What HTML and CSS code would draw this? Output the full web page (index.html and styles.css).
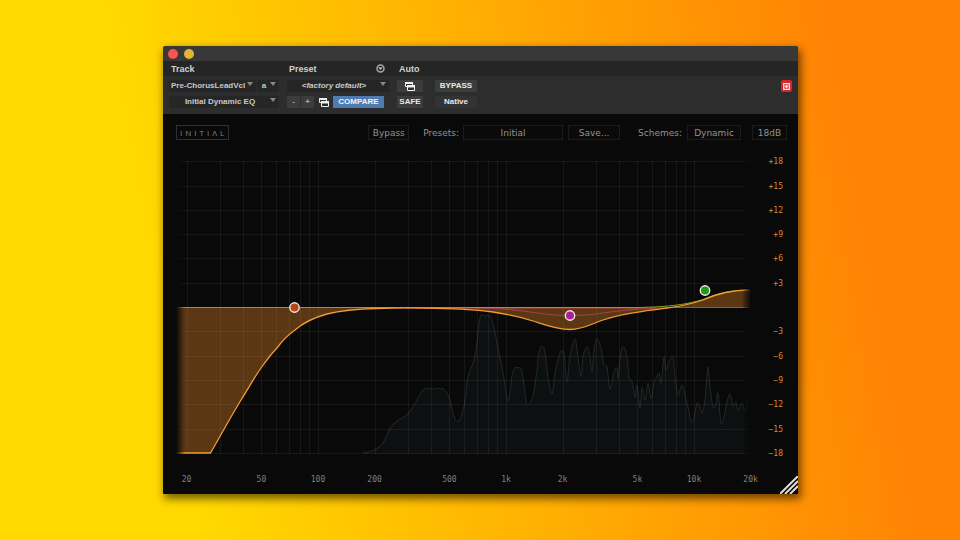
FILE: index.html
```html
<!DOCTYPE html>
<html lang="en">
<head>
    <meta charset="UTF-8">
    <meta name="viewport" content="width=device-width, initial-scale=1.0">
    <title>Initial Dynamic EQ</title>
    <link rel="stylesheet" href="styles.css">
</head>
<body>
    <main class="window">
        <div class="titlebar">
            <button class="light close" aria-label="Close"></button>
            <button class="light minimize" aria-label="Minimize"></button>
        </div>

        <div class="host-labels host-grid">
            <span>Track</span>
            <span class="preset-label">Preset
                <button class="menu-button" aria-label="Preset menu">
                    <svg viewBox="0 0 9 9"><circle cx="4.5" cy="4.5" r="3.5"/><path d="M2.2 3.3h4.600L4.500 6.200z"/></svg>
                </button>
            </span>
            <span>Auto</span>
        </div>

        <div class="host-controls host-grid">
            <div class="host-column">
                <div class="host-row">
                    <span class="drop wide"><select class="left" aria-label="Track name"><option>Pre-ChorusLeadVcl</option></select></span>
                    <span class="drop letter"><select aria-label="Insert"><option>a</option></select></span>
                </div>
                <div class="host-row">
                    <span class="drop wide"><select aria-label="Plug-in"><option>Initial Dynamic EQ</option></select></span>
                </div>
            </div>
            <div class="host-column">
                <div class="host-row">
                    <span class="drop wide"><select class="italic" aria-label="Preset"><option>&lt;factory default&gt;</option></select></span>
                </div>
                <div class="host-row">
                    <button class="step">-</button>
                    <button class="step">+</button>
                    <button class="copy" aria-label="Copy settings">
                        <svg class="copy-icon" viewBox="0 0 10 9"><path class="sheet" d="M.5.5h7v4h-7z"/><path d="M0 0h8v2H0z"/><path class="sheet" d="M2.500 3.500h7v5h-7z"/><path d="M2 3h8v2.500H2z"/></svg>
                    </button>
                    <button class="compare">COMPARE</button>
                </div>
            </div>
            <div class="host-column">
                <button class="auto" aria-label="Automation">
                    <svg class="copy-icon" viewBox="0 0 10 9"><path class="sheet" d="M.5.5h7v4h-7z"/><path d="M0 0h8v2H0z"/><path class="sheet" d="M2.500 3.500h7v5h-7z"/><path d="M2 3h8v2.500H2z"/></svg>
                </button>
                <button class="auto">SAFE</button>
            </div>
            <div class="host-column">
                <button>BYPASS</button>
                <button class="native">Native</button>
            </div>
            <button class="target" aria-label="Target">
                <svg viewBox="0 0 8 8"><path d="M.8.8h6.4v6.4H.8z"/><path d="M4 2v4M2 4h4"/></svg>
            </button>
        </div>

        <div class="toolbar">
            <span class="logo">INITIΛL</span>
            <button class="bypass">Bypass</button>
            <label for="presets">Presets:</label>
            <select id="presets" class="presets"><option>Initial</option></select>
            <button class="save">Save...</button>
            <label for="schemes" class="schemes-label">Schemes:</label>
            <select id="schemes" class="schemes"><option>Dynamic</option></select>
            <select class="slope" aria-label="Slope"><option>18dB</option></select>
        </div>

        <svg class="graph" viewBox="0 0 635 340" role="img" aria-label="Equalizer curve">
            <defs>
                <linearGradient id="edgeFade">
                    <stop offset="0" stop-color="#fff" stop-opacity="0"/>
                    <stop offset="0.015" stop-color="#fff"/>
                    <stop offset="0.985" stop-color="#fff"/>
                    <stop offset="1" stop-color="#fff" stop-opacity="0.1"/>
                </linearGradient>
                <mask id="edges" maskUnits="userSpaceOnUse" x="0" y="-5" width="575" height="305">
                    <rect x="0" y="-5" width="574" height="305" fill="url(#edgeFade)"/>
                </mask>
            </defs>
            <g transform="translate(13 7)">
                <g mask="url(#edges)">
                    <path id="spectrumFill" class="spectrum-fill"/>
                    <path id="spectrumLine" class="spectrum-line"/>
                    <g id="grid" class="grid"></g>
                    <path class="eq-fill" d="M0 292H34.5C45 274 54 257 65 239C72 228 78 217 85 207C90 200 95 193 101 187C106 180 112 174 119 169C128 161 140 156 151 153C165 149.5 180 148 200 147.5C215 147 250 147 260 147.3C285 147.8 303 149 317 151C333 153.5 346 156.5 357 160C368 163.5 380 168.5 394 168.5C407 168.5 415 163 427 159C440 154.5 454 152 467 150.3C477 149 486 148 494 146.7C505 145 518 142 527 139C540 133 553 129 574 129V146.5H0Z"/>
                    <path class="band red" d="M230 147H480M490 146.500H574"/>
                    <path class="band purple" d="M300 147C350 147.5 362 154.5 394 154.5C426 154.5 436 148 490 147"/>
                    <path class="band green" d="M0 146.5H460C495 146 512 143 527 138.5C540 133 553 129 574 129"/>
                    <path class="eq-line" d="M0 292H34.5C45 274 54 257 65 239C72 228 78 217 85 207C90 200 95 193 101 187C106 180 112 174 119 169C128 161 140 156 151 153C165 149.5 180 148 200 147.5C215 147 250 147 260 147.3C285 147.8 303 149 317 151C333 153.5 346 156.5 357 160C368 163.5 380 168.5 394 168.5C407 168.5 415 163 427 159C440 154.5 454 152 467 150.3C477 149 486 148 494 146.7C505 145 518 142 527 139C540 133 553 129 574 129"/>
                </g>
                <circle class="handle low" cx="118.5" cy="146.5" r="4.7"/>
                <circle class="handle mid" cx="394" cy="154.5" r="4.7"/>
                <circle class="handle high" cx="529" cy="129.5" r="4.7"/>
                <g id="frequencies" class="frequencies"></g>
                <g id="gains" class="gains"></g>
            </g>
        </svg>
        <svg class="grip" viewBox="0 0 18 18"><path d="M0 18L18 0M5 18L18 5M10 18L18 10"/></svg>
    </main>
    <script src="script.js"></script>
</body>
</html>
```
FILE: styles.css
```css
* {
    box-sizing: border-box;
}

body {
    margin: 0;
    min-height: 100vh;
    padding: 46px 162px 46px 163px;
    background: linear-gradient(80deg, #ffd900 19%, #ff8404 87%);
    font-family: "Liberation Sans", Arial, sans-serif;
}

.window {
    position: relative;
    background: #090909;
    border-radius: 3px 3px 1px 1px;
    box-shadow: 2px 4px 8px 1px rgba(0, 0, 0, 0.55);
    overflow: hidden;
}

button, select {
    appearance: none;
    margin: 0;
    padding: 0;
    border: none;
    border-radius: 0;
    font: inherit;
    color: inherit;
    cursor: pointer;
}

svg {
    display: block;
}

/* title bar */
.titlebar {
    display: flex;
    align-items: center;
    gap: 6px;
    height: 15px;
    padding-left: 5px;
    background: #383838;
}

.light {
    width: 10px;
    height: 10px;
    border-radius: 50%;
}

.close {
    background: #f9554e;
}

.minimize {
    background: #e3b535;
}

/* plug-in host header */
.host-grid {
    display: grid;
    grid-template-columns: 110px 102px 30px 42px 1fr;
    column-gap: 8px;
    padding: 0 6px;
}

.host-labels {
    height: 15px;
    align-items: center;
    background: #252525;
    color: #d0d0d0;
    font-size: 9px;
    font-weight: bold;
}

.host-labels span {
    padding-left: 2px;
}

.preset-label {
    display: flex;
    align-items: center;
    justify-content: space-between;
}

.menu-button {
    width: 9px;
    height: 9px;
    margin-right: 4px;
    background: none;
}

.menu-button circle {
    fill: none;
    stroke: #a5a5a5;
    stroke-width: 1.5;
}

.menu-button path {
    fill: #b5b5b5;
}

.host-controls {
    padding-top: 4px;
    padding-bottom: 6px;
    background: #2d2d2d;
    color: #e8e8e8;
    font-size: 8px;
    font-weight: bold;
}

.host-column {
    display: flex;
    flex-direction: column;
    gap: 4px;
}

.host-row {
    display: flex;
    gap: 1px;
}

.host-controls button,
.host-controls select {
    height: 12px;
    line-height: 12px;
    background: #3c3c3c;
}

.drop {
    position: relative;
}

.drop::after {
    content: "";
    position: absolute;
    top: 2px;
    right: 3px;
    border: 3px solid transparent;
    border-top: 4px solid #888;
    border-bottom: none;
    pointer-events: none;
}

.host-controls .drop select {
    display: block;
    width: 100%;
    padding: 0 8px 0 0;
    background: #262626;
    color: #c8c8c8;
    text-align-last: center;
}

.host-controls .drop .left {
    padding: 0 0 0 2px;
    text-align-last: left;
}

.host-controls .drop .italic {
    font-style: italic;
}

.wide {
    flex: 1;
}

.letter {
    width: 22px;
}

.host-controls .step {
    width: 13px;
    color: #aaa;
}

.host-controls .copy {
    width: 17px;
    background: none;
}

.copy-icon {
    width: 10px;
    height: 9px;
    margin: 0 auto;
    fill: #f0f0f0;
}

.copy-icon .sheet {
    fill: #2d2d2d;
    stroke: #f0f0f0;
}

.host-controls .compare {
    width: 51px;
    background: #4f7bb0;
    color: #f0f4fa;
}

.host-controls .auto {
    width: 26px;
}

.host-controls .native {
    background: #333;
}

.host-controls .target {
    justify-self: end;
    width: 11px;
    background: #d3292c;
    border-radius: 2px;
}

.target svg {
    width: 7px;
    height: 7px;
    margin: 0 auto;
    fill: none;
    stroke: #ffd8d8;
    stroke-width: 1.5;
}

/* plug-in toolbar */
.toolbar {
    display: flex;
    align-items: center;
    padding: 11px 11px 14px 13px;
    color: #929292;
    font-family: "DejaVu Sans", sans-serif;
    font-size: 9px;
}

.toolbar button,
.toolbar select {
    height: 15px;
    border: 1px solid #1c1c1c;
    background: #0a0a0a;
    text-align: center;
    text-align-last: center;
}

.logo {
    width: 53px;
    height: 15px;
    margin-right: auto;
    padding-left: 3px;
    border: 1px solid #303030;
    color: #858585;
    font-family: "Open Sans", sans-serif;
    font-size: 8px;
    line-height: 13px;
    letter-spacing: 3px;
}

.bypass {
    width: 41px;
    margin-right: 14px;
}

.presets {
    width: 100px;
    margin: 0 5px 0 4px;
}

.save {
    width: 52px;
}

.schemes-label {
    margin-left: 18px;
}

.schemes {
    width: 54px;
    margin: 0 11px 0 5px;
}

.slope {
    width: 35px;
}

/* graph */
.graph {
    width: 100%;
    height: auto;
    font-family: "DejaVu Sans Mono", monospace;
    font-size: 8px;
}

.grid {
    stroke: #fff;
    stroke-opacity: 0.06;
}

.spectrum-fill {
    fill: #0d1011;
}

.spectrum-line {
    fill: none;
    stroke: #25292a;
}

.eq-fill {
    fill: #f79028;
    fill-opacity: 0.35;
}

.eq-line {
    fill: none;
    stroke: #f29b35;
    stroke-width: 1.3;
}

.band {
    fill: none;
    stroke-width: 1;
}

.red {
    stroke: #b8482c;
}

.purple {
    stroke: #a04450;
}

.green {
    stroke: #86a326;
}

.handle {
    stroke: #f0e8e0;
    stroke-width: 1.4;
}

.low {
    fill: #b04a18;
}

.mid {
    fill: #a8209a;
}

.high {
    fill: #1d9a1d;
}

.frequencies {
    fill: #808080;
    text-anchor: middle;
}

.gains {
    fill: #dc8934;
    text-anchor: end;
}

.grip {
    position: absolute;
    right: 0;
    bottom: 0;
    width: 18px;
    height: 18px;
    fill: none;
    stroke: #ddd;
    stroke-width: 2;
}
```
FILE: script.js
```javascript
const NS = 'http://www.w3.org/2000/svg';

function add(parent, name, attrs, text) {
    const el = document.createElementNS(NS, name);
    for (const key in attrs) el.setAttribute(key, attrs[key]);
    if (text) el.textContent = text;
    parent.appendChild(el);
}

// log frequency and linear gain to plot coordinates
const xOf = freq => 142 + 188 * Math.log10(freq / 100);
const yOf = gain => 146.5 - gain * 8.1;

const grid = document.getElementById('grid');
for (let decade = 10; decade <= 10000; decade *= 10) {
    for (let n = 1; n < 10; n++) {
        const freq = decade * n;
        if (freq < 20 || freq > 10000) continue;
        const x = Math.round(xOf(freq)) + 0.5;
        add(grid, 'path', { d: `M${x} 0V293` });
    }
}

const gains = document.getElementById('gains');
for (let gain = 18; gain >= -18; gain -= 3) {
    if (gain === 0) continue;
    const y = Math.floor(yOf(gain)) + 0.5;
    add(grid, 'path', { d: `M0 ${y}H574` });
    add(gains, 'text', { x: 607, y: y + 2.5 }, (gain > 0 ? '+' : '\u2212') + Math.abs(gain));
}

const frequencies = document.getElementById('frequencies');
[20, 50, 100, 200, 500, 1000, 2000, 5000, 10000, 20000].forEach(freq => {
    const label = freq < 1000 ? String(freq) : freq / 1000 + 'k';
    add(frequencies, 'text', { x: xOf(freq), y: 321 }, label);
});

const spectrum = [
    [187, 292], [196, 290], [207, 282], [214, 267], [221, 260], [232, 253], [241, 239], [248, 228],
    [257, 228], [267, 228], [273, 236], [277, 252], [282, 261], [288, 245], [292, 216], [299, 195],
    [304, 157], [309, 155], [314, 155], [317, 162], [321, 182], [327, 212], [332, 240], [336, 215],
    [339, 207], [345, 208], [347, 217], [350, 239], [352, 244], [357, 235], [361, 209], [363, 191],
    [366, 185], [369, 192], [372, 216], [376, 233], [379, 212], [384, 192], [388, 193], [391, 221],
    [394, 195], [399, 178], [401, 189], [405, 216], [407, 196], [411, 186], [414, 196], [416, 211],
    [418, 189], [421, 178], [425, 187], [428, 204], [431, 206], [434, 228], [438, 211], [441, 207],
    [442, 217], [445, 191], [448, 186], [451, 196], [453, 216], [456, 221], [459, 236], [461, 224],
    [464, 247], [466, 226], [469, 239], [472, 222], [475, 238], [478, 221], [481, 216], [483, 212],
    [485, 222], [488, 196], [490, 209], [493, 201], [497, 196], [499, 216], [502, 234], [506, 224],
    [510, 239], [512, 246], [515, 261], [518, 257], [521, 242], [524, 246], [526, 252], [529, 239],
    [532, 206], [534, 226], [537, 246], [540, 242], [542, 232], [545, 262], [548, 256], [551, 241],
    [554, 233], [557, 246], [560, 241], [562, 249], [566, 242], [569, 251], [572, 239]
];

// smooth line through every point
function smooth(points) {
    let d = `M${points[0]}`;
    for (let i = 0; i < points.length - 1; i++) {
        const [x0, y0] = points[i - 1] || points[i];
        const [x1, y1] = points[i];
        const [x2, y2] = points[i + 1];
        const [x3, y3] = points[i + 2] || points[i + 1];
        d += `C${x1 + (x2 - x0) / 6},${y1 + (y2 - y0) / 6} ${x2 - (x3 - x1) / 6},${y2 - (y3 - y1) / 6} ${x2},${y2}`;
    }
    return d;
}

const line = smooth(spectrum);
document.getElementById('spectrumLine').setAttribute('d', line);
document.getElementById('spectrumFill').setAttribute('d', line + 'V293H187Z');
```
